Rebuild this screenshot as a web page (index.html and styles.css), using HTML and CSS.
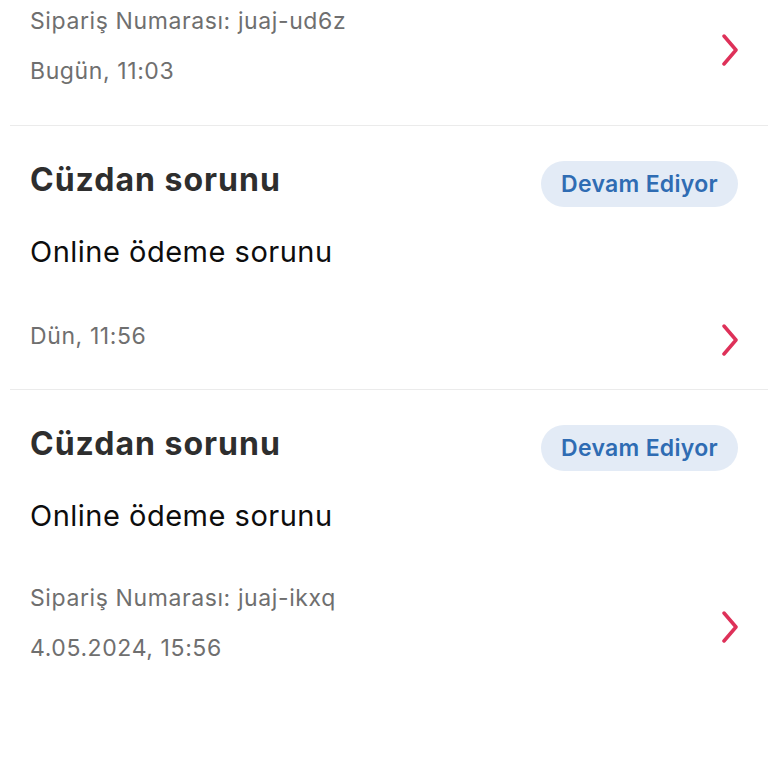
FILE: index.html
```html
<!DOCTYPE html>
<html lang="tr">
<head>
<meta charset="utf-8">
<title>Destek Talepleri</title>
<link rel="stylesheet" href="styles.css">
</head>
<body>
<div class="list">
  <div class="ticket ticket-cut">
    <div class="foot">
      <div class="meta">
        <span>Sipariş Numarası: juaj-ud6z</span>
        <span>Bugün, 11:03</span>
      </div>
      <span class="chev"><svg width="16" height="32" viewBox="0 0 16 32"><polyline points="2,2 14,16 2,30" /></svg></span>
    </div>
  </div>
  <div class="ticket">
    <div class="head">
      <h2 class="title">Cüzdan sorunu</h2>
      <span class="badge">Devam Ediyor</span>
    </div>
    <p class="desc">Online ödeme sorunu</p>
    <div class="foot">
      <div class="meta">
        <span>Dün, 11:56</span>
      </div>
      <span class="chev"><svg width="16" height="32" viewBox="0 0 16 32"><polyline points="2,2 14,16 2,30" /></svg></span>
    </div>
  </div>
  <div class="ticket ticket-last">
    <div class="head">
      <h2 class="title">Cüzdan sorunu</h2>
      <span class="badge">Devam Ediyor</span>
    </div>
    <p class="desc">Online ödeme sorunu</p>
    <div class="foot">
      <div class="meta">
        <span>Sipariş Numarası: juaj-ikxq</span>
        <span>4.05.2024, 15:56</span>
      </div>
      <span class="chev"><svg width="16" height="32" viewBox="0 0 16 32"><polyline points="2,2 14,16 2,30" /></svg></span>
    </div>
  </div>
</div>
</body>
</html>
```
FILE: styles.css
```css
html, body {
  margin: 0;
  padding: 0;
  background: #ffffff;
}

body {
  font-family: Inter, "Noto Sans", "Liberation Sans", sans-serif;
  -webkit-font-smoothing: antialiased;
}

.list {
  display: flex;
  flex-direction: column;
}

.ticket {
  margin-left: 10px;
  padding: 35px 30px 37px 20px;
  border-bottom: 1px solid #ebebeb;
}

.ticket-cut {
  padding-top: 7px;
  padding-bottom: 40px;
}

.ticket-last {
  border-bottom: none;
}

.head {
  display: flex;
  justify-content: space-between;
  align-items: flex-start;
}

.title {
  margin: 0;
  font-size: 32px;
  line-height: 38px;
  font-weight: 700;
  letter-spacing: 1px;
  color: #2e2e2e;
}

.badge {
  height: 46px;
  padding: 0 20px;
  border-radius: 23px;
  background: #e3ebf6;
  color: #2f6cb3;
  font-size: 23px;
  line-height: 46px;
  font-weight: 600;
  letter-spacing: 0.3px;
}

.desc {
  margin: 27px 0 0;
  font-size: 29px;
  line-height: 36px;
  letter-spacing: 0.5px;
  color: #0d0d0d;
}

.foot {
  display: flex;
  justify-content: space-between;
  align-items: center;
  margin-top: 50px;
}

.ticket-cut .foot {
  margin-top: 0;
}

.meta {
  display: flex;
  flex-direction: column;
  gap: 22px;
  font-size: 23px;
  line-height: 28px;
  letter-spacing: 0.6px;
  color: #6f6f6f;
}

.chev {
  display: flex;
  transform: translateY(4px);
}

.chev polyline {
  fill: none;
  stroke: #de3159;
  stroke-width: 3.5;
  stroke-linecap: round;
  stroke-linejoin: round;
}
```
